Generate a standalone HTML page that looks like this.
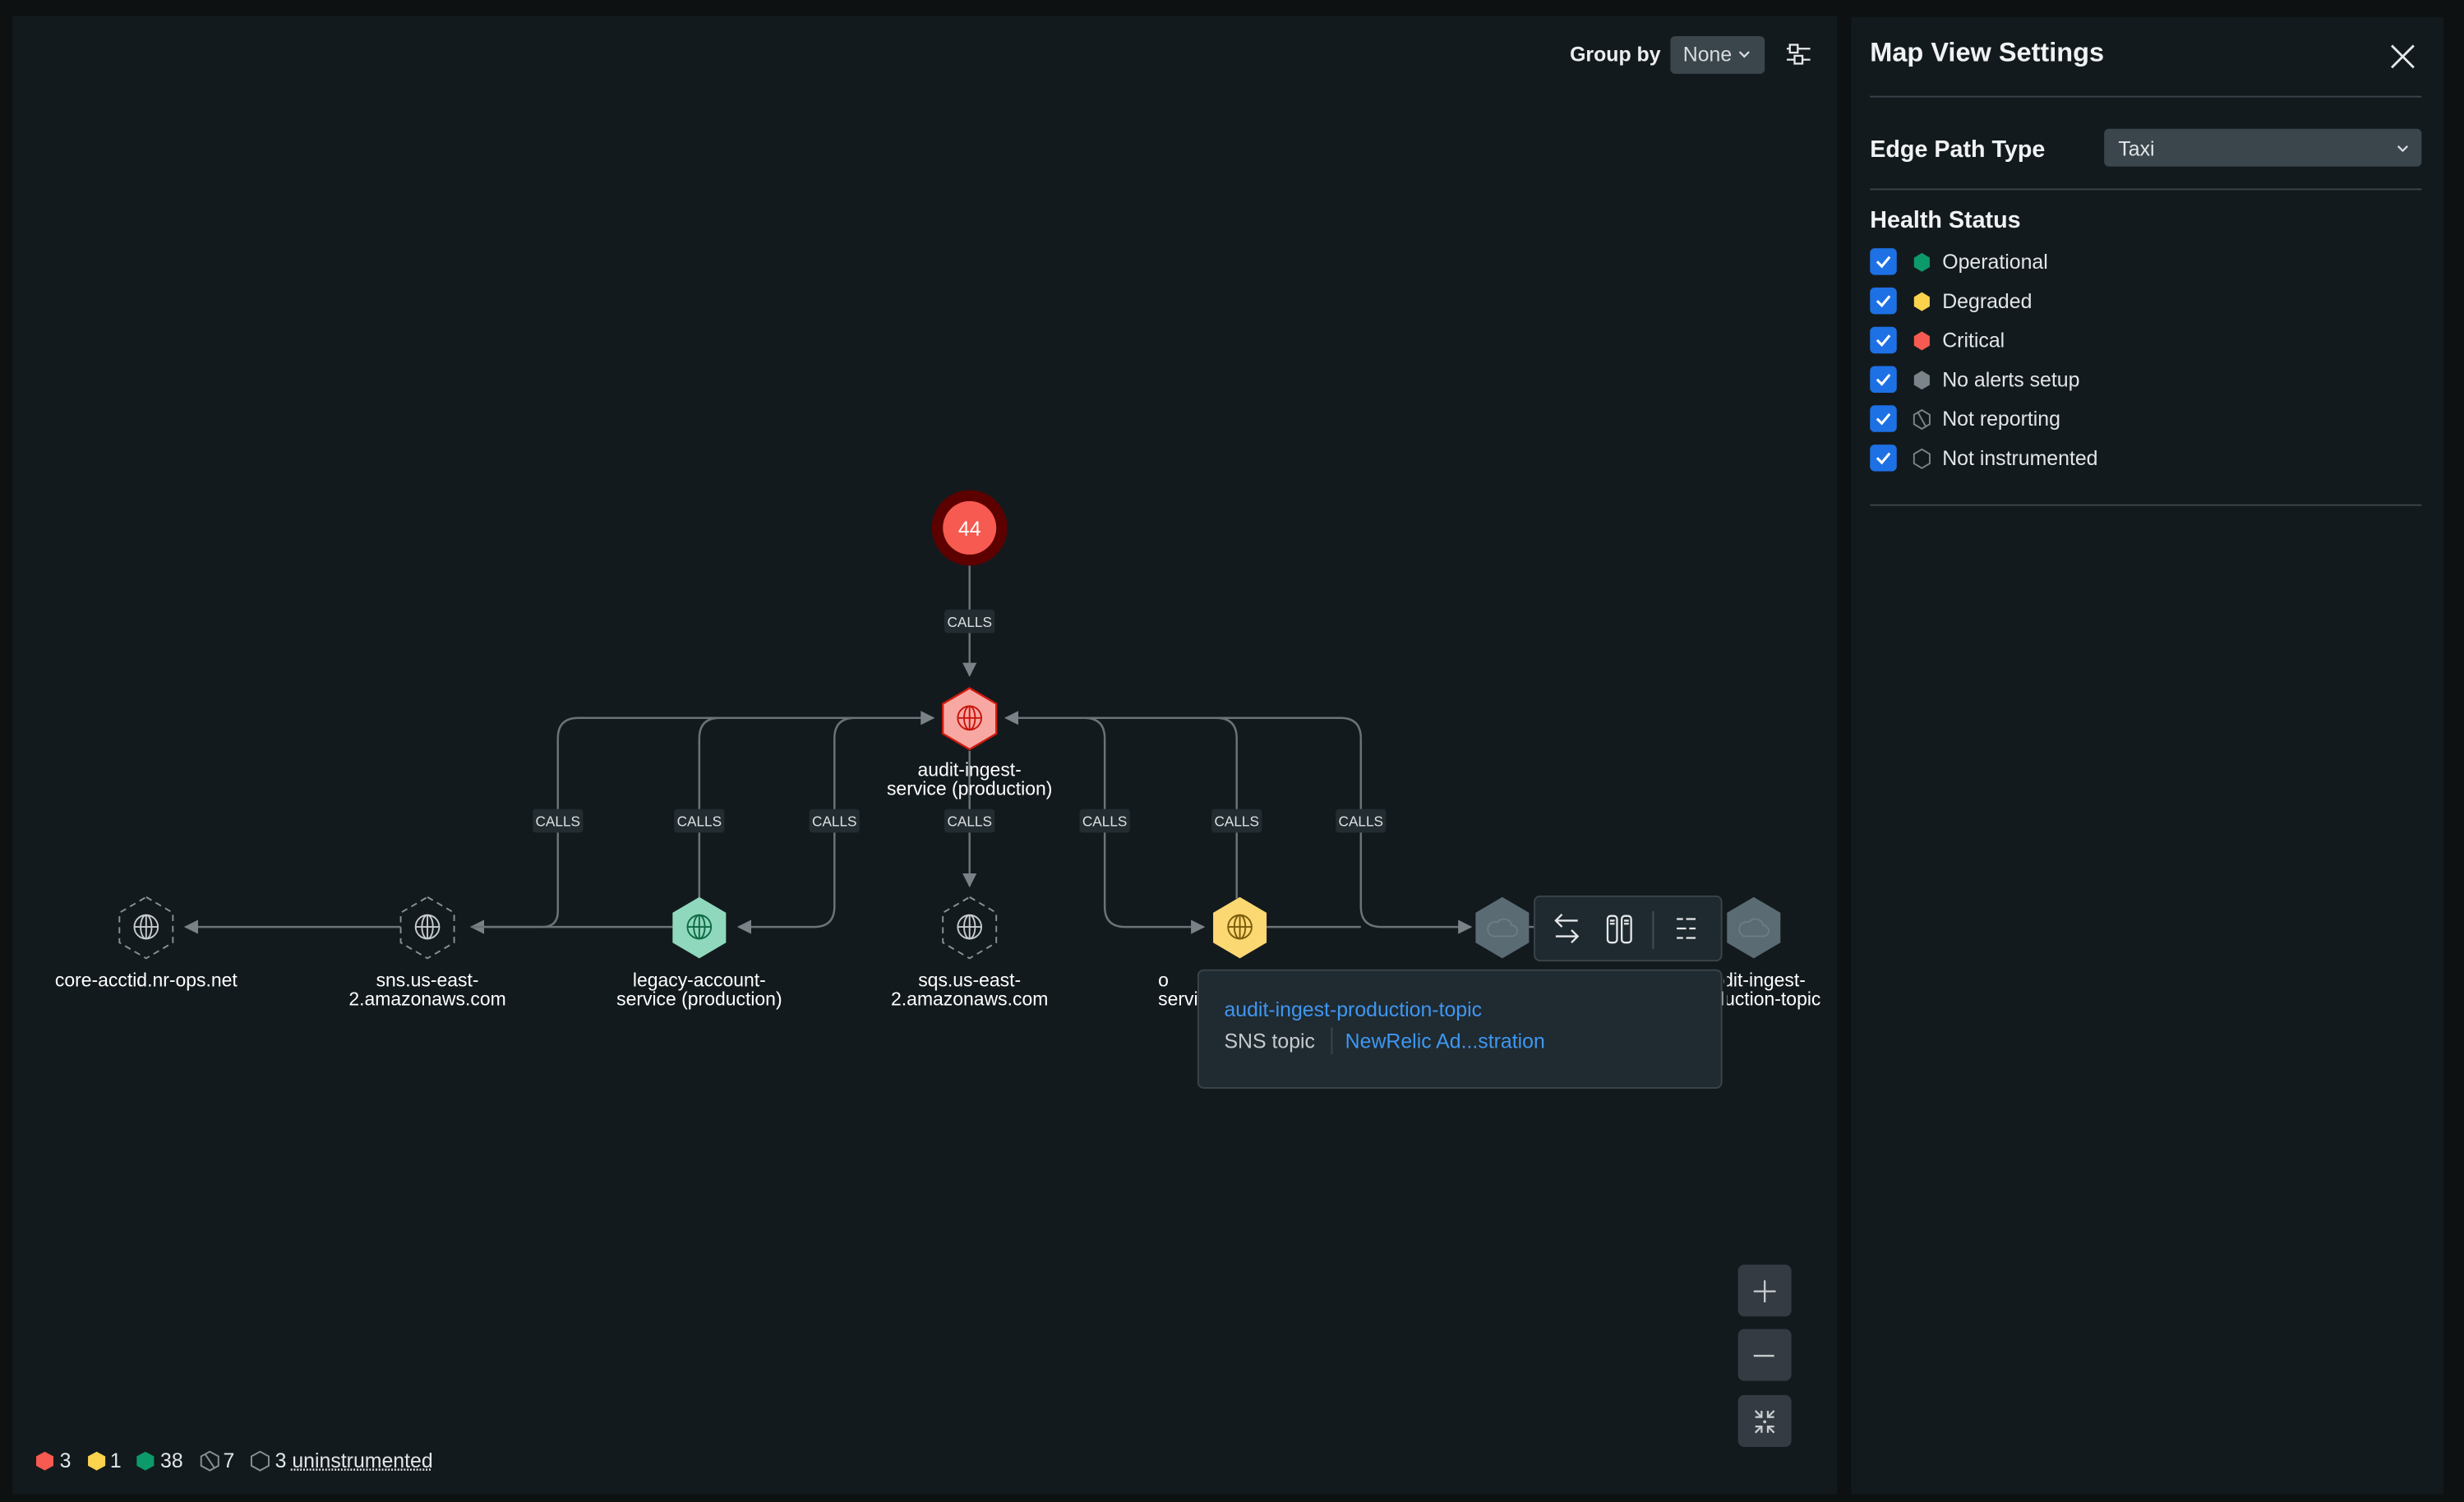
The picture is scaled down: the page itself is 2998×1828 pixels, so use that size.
<!DOCTYPE html>
<html><head><meta charset="utf-8"><style>
html,body{margin:0;padding:0;background:#0d1112;overflow:hidden;width:2998px;height:1828px}
#root{position:absolute;left:0;top:0;width:1568px;height:956px;transform:scale(1.912);transform-origin:0 0;font-family:"Liberation Sans",sans-serif;color:#e8eaeb}
.panel{position:absolute;background:#131a1d}
.abs{position:absolute}
.lbl{position:absolute;font-size:12px;line-height:12px;color:#fff;text-align:center;width:160px;margin-left:-80px}
.row{position:absolute;left:1190px;height:17px;font-size:13px;color:#e3e6e8}
.cb{position:absolute;left:0;top:0;width:17px;height:17px;background:#1d71e5;border-radius:3px}
.row span{position:absolute;left:46px;top:1px;white-space:nowrap}
.row svg.h{position:absolute;left:27px;top:2px}
.zb{position:absolute;left:1106px;width:34px;height:33px;background:#343b42;border-radius:4px}
.lg{position:absolute;top:922px;font-size:13px;color:#e3e6e8;white-space:nowrap}
.lgi{position:absolute;top:923px}
</style></head><body><div id="root">
<div class="panel" style="left:8px;top:10px;width:1161px;height:941px"></div>
<div class="panel" style="left:1178px;top:11px;width:377px;height:940px"></div>

<svg class="abs" style="left:0;top:0" width="1170" height="956" viewBox="0 0 1170 956">
<defs><marker id="ar" viewBox="0 0 10 10" refX="9" refY="5" markerWidth="9" markerHeight="9" orient="auto-start-reverse" markerUnits="userSpaceOnUse"><path d="M0,0L10,5L0,10z" fill="#7a8288"/></marker></defs>
<g stroke="#6b7379" stroke-width="1.3" fill="none">
<line x1="617" y1="360" x2="617" y2="430" marker-end="url(#ar)"/>
<line x1="617" y1="478" x2="617" y2="564" marker-end="url(#ar)"/>
<path d="M355 470 V580 Q355 590 345 590 H300" marker-end="url(#ar)"/>
<path d="M355 470 Q355 457 368 457 H594" marker-end="url(#ar)"/>
<path d="M445 470 Q445 457 458 457"/>
<line x1="445" y1="470" x2="445" y2="572"/>
<path d="M531 470 Q531 457 544 457"/>
<path d="M531 470 V577 Q531 590 518 590 H470" marker-end="url(#ar)"/>
<path d="M866 470 Q866 457 853 457 H640" marker-end="url(#ar)"/>
<path d="M703 470 Q703 457 690 457"/><path d="M787 470 Q787 457 774 457"/>
<path d="M703 470 V577 Q703 590 716 590 H766" marker-end="url(#ar)"/>
<line x1="787" y1="470" x2="787" y2="572"/>
<path d="M866 470 V577 Q866 590 879 590 H936" marker-end="url(#ar)"/>
<line x1="806" y1="590" x2="866" y2="590"/>
<line x1="255" y1="590" x2="118" y2="590" marker-end="url(#ar)"/>
<line x1="428" y1="590" x2="300" y2="590"/>
<line x1="973" y1="590" x2="980" y2="590"/>
</g>
<g font-family="Liberation Sans,sans-serif" font-size="9" fill="#dde0e2" text-anchor="middle">
<g><rect x="601" y="388" width="32" height="15" rx="2" fill="#222c31"/><text x="617" y="399">CALLS</text></g>
<g><rect x="339" y="515" width="32" height="15" rx="2" fill="#222c31"/><text x="355" y="526">CALLS</text></g>
<g><rect x="429" y="515" width="32" height="15" rx="2" fill="#222c31"/><text x="445" y="526">CALLS</text></g>
<g><rect x="515" y="515" width="32" height="15" rx="2" fill="#222c31"/><text x="531" y="526">CALLS</text></g>
<g><rect x="601" y="515" width="32" height="15" rx="2" fill="#222c31"/><text x="617" y="526">CALLS</text></g>
<g><rect x="687" y="515" width="32" height="15" rx="2" fill="#222c31"/><text x="703" y="526">CALLS</text></g>
<g><rect x="771" y="515" width="32" height="15" rx="2" fill="#222c31"/><text x="787" y="526">CALLS</text></g>
<g><rect x="850" y="515" width="32" height="15" rx="2" fill="#222c31"/><text x="866" y="526">CALLS</text></g>
</g>
<circle cx="617" cy="336" r="24" fill="#5c0000"/><circle cx="617" cy="336" r="17" fill="#f65a50"/>
<text x="617" y="341" font-family="Liberation Sans,sans-serif" font-size="13" fill="#fff" text-anchor="middle">44</text>
<path d="M617 438 L634 448 V467 L617 477 L600 467 V448Z" fill="#f8a8a2" stroke="#d21a10" stroke-width="1.2"/>
<g stroke="#c8140c" fill="none" stroke-width="1"><circle cx="617" cy="457" r="7.5"/><ellipse cx="617" cy="457" rx="3.5" ry="7.5"/><line x1="609.5" y1="457" x2="624.5" y2="457"/><line x1="617" y1="449.5" x2="617" y2="464.5"/></g>
<path d="M445 571 L462 581 V600 L445 610 L428 600 V581Z" fill="#8fd8bd"/>
<g stroke="#0e6b45" fill="none" stroke-width="1"><circle cx="445" cy="590" r="7.5"/><ellipse cx="445" cy="590" rx="3.5" ry="7.5"/><line x1="437.5" y1="590" x2="452.5" y2="590"/><line x1="445" y1="582.5" x2="445" y2="597.5"/></g>
<path d="M789 571 L806 581 V600 L789 610 L772 600 V581Z" fill="#fcd872"/>
<g stroke="#7a5b0a" fill="none" stroke-width="1"><circle cx="789" cy="590" r="7.5"/><ellipse cx="789" cy="590" rx="3.5" ry="7.5"/><line x1="781.5" y1="590" x2="796.5" y2="590"/><line x1="789" y1="582.5" x2="789" y2="597.5"/></g>
<g stroke="#8a9196" fill="none" stroke-width="1" stroke-dasharray="4 3">
<path d="M93 571 L110 581 V600 L93 610 L76 600 V581Z"/>
<path d="M272 571 L289 581 V600 L272 610 L255 600 V581Z"/>
<path d="M617 571 L634 581 V600 L617 610 L600 600 V581Z"/>
</g>
<g stroke="#c7cbce" fill="none" stroke-width="1">
<g><circle cx="93" cy="590" r="7.5"/><ellipse cx="93" cy="590" rx="3.5" ry="7.5"/><line x1="85.5" y1="590" x2="100.5" y2="590"/><line x1="93" y1="582.5" x2="93" y2="597.5"/></g>
<g><circle cx="272" cy="590" r="7.5"/><ellipse cx="272" cy="590" rx="3.5" ry="7.5"/><line x1="264.5" y1="590" x2="279.5" y2="590"/><line x1="272" y1="582.5" x2="272" y2="597.5"/></g>
<g><circle cx="617" cy="590" r="7.5"/><ellipse cx="617" cy="590" rx="3.5" ry="7.5"/><line x1="609.5" y1="590" x2="624.5" y2="590"/><line x1="617" y1="582.5" x2="617" y2="597.5"/></g>
</g>
<path d="M956 571 L973 581 V600 L956 610 L939 600 V581Z" fill="#5a6b74"/>
<path d="M1116 571 L1133 581 V600 L1116 610 L1099 600 V581Z" fill="#5a6b74"/>
<g stroke="#6d7d86" fill="none" stroke-width="1"><path d="M950 596 h12 a3.5 3.5 0 0 0 0-7 a5 5 0 0 0-9-2 a3.5 3.5 0 0 0-3 9z"/><path d="M1110 596 h12 a3.5 3.5 0 0 0 0-7 a5 5 0 0 0-9-2 a3.5 3.5 0 0 0-3 9z"/></g>
</svg>

<div class="lbl" style="left:93px;top:618px">core-acctid.nr-ops.net</div>
<div class="lbl" style="left:272px;top:618px">sns.us-east-<br>2.amazonaws.com</div>
<div class="lbl" style="left:445px;top:618px">legacy-account-<br>service (production)</div>
<div class="lbl" style="left:617px;top:618px">sqs.us-east-<br>2.amazonaws.com</div>
<div class="lbl" style="left:617px;top:484px">audit-ingest-<br>service (production)</div>
<div class="abs" style="left:737px;top:618px;font-size:12px;line-height:12px;color:#fff">o<br>servi</div>
<div class="lbl" style="left:1116px;top:618px">audit-ingest-<br>production-topic</div>

<div class="abs" style="left:976px;top:570px;width:120px;height:42px;background:#1f2a30;border:1px solid #3a454b;border-radius:4px;box-sizing:border-box">
<svg width="120" height="42" viewBox="0 0 120 42" style="position:absolute;left:-1px;top:-1px"><g stroke="#e6e8ea" fill="none" stroke-width="1.2">
<path d="M28 16 H14 M18 12 L14 16 L18 20 M14 26 H28 M24 22 L28 26 L24 30"/>
<rect x="47" y="13" width="6" height="17" rx="2"/><rect x="56" y="13" width="6" height="17" rx="2"/><path d="M48.5 16h3M48.5 18h3M57.5 16h3M57.5 18h3"/>
<line x1="76" y1="10" x2="76" y2="34" stroke="#3f4a50"/>
<path d="M91 15h4M97 15h6M91 21h6M99 21h4M91 27h4M97 27h6"/>
</g></svg></div>
<div class="abs" style="left:762px;top:617px;width:334px;height:76px;background:#1f2a31;border:1px solid #3a454b;border-radius:4px;box-sizing:border-box">
<div class="abs" style="left:16px;top:17px;font-size:13px;color:#3f97f0">audit-ingest-production-topic</div>
<div class="abs" style="left:16px;top:37px;font-size:13px;color:#c6cacd">SNS topic</div>
<div class="abs" style="left:84px;top:36px;width:1px;height:17px;background:#3a454b"></div>
<div class="abs" style="left:93px;top:37px;font-size:13px;color:#3f97f0">NewRelic Ad...stration</div>
</div>
<div class="abs" style="left:1097px;top:612px;width:2px;height:40px;background:#131a1d"></div>

<div class="abs" style="left:999px;top:27px;font-size:13px;font-weight:bold;color:#eceeef">Group by</div>
<div class="abs" style="left:1063px;top:23px;width:60px;height:24px;background:#3b454c;border-radius:3px;font-size:13px;color:#d8dcde"><span style="position:absolute;left:8px;top:4px">None</span>
<svg style="position:absolute;left:43px;top:9px" width="8" height="6"><path d="M1 1 L4 4 L7 1" stroke="#d8dcde" fill="none" stroke-width="1.2"/></svg></div>
<svg class="abs" style="left:1136px;top:27px" width="18" height="16"><g stroke="#e6e8ea" fill="none" stroke-width="1.2"><path d="M1 4h2M8 4h8M1 11h5M11 11h5"/><rect x="3" y="1.5" width="5" height="5"/><rect x="6" y="8.5" width="5" height="5"/></g></svg>

<div class="zb" style="top:805px"><svg width="34" height="33"><path d="M17 10v14M10 17h14" stroke="#c8ccce" stroke-width="1.2"/></svg></div>
<div class="zb" style="top:846px"><svg width="34" height="33"><path d="M10 17h13" stroke="#c8ccce" stroke-width="1.2"/></svg></div>
<div class="zb" style="top:888px"><svg width="34" height="33"><g stroke="#c8ccce" stroke-width="1.2" fill="none"><path d="M11 10l4 4M11 14h4v-4M23 10l-4 4M23 14h-4v-4M11 24l4-4M11 20h4v4M23 24l-4-4M23 20h-4v4"/></g><circle cx="17" cy="17" r="1" fill="#c8ccce"/></svg></div>

<svg class="lgi" style="left:22px" width="13" height="14"><path d="M6.5 1L12 4V10L6.5 13L1 10V4Z" fill="#f65a50"/></svg><div class="lg" style="left:38px">3</div>
<svg class="lgi" style="left:55px" width="13" height="14"><path d="M6.5 1L12 4V10L6.5 13L1 10V4Z" fill="#fcd34d"/></svg><div class="lg" style="left:70px">1</div>
<svg class="lgi" style="left:86px" width="13" height="14"><path d="M6.5 1L12 4V10L6.5 13L1 10V4Z" fill="#0c9a6a"/></svg><div class="lg" style="left:102px">38</div>
<svg class="lgi" style="left:127px" width="13" height="14"><path d="M6.5 1L12 4V10L6.5 13L1 10V4Z M3.5 2.5L9.5 11.5" fill="none" stroke="#8a9196"/></svg><div class="lg" style="left:142px">7</div>
<svg class="lgi" style="left:159px" width="13" height="14"><path d="M6.5 1L12 4V10L6.5 13L1 10V4Z" fill="none" stroke="#8a9196"/></svg><div class="lg" style="left:175px">3 <span style="text-decoration:underline dotted">uninstrumented</span></div>

<div class="abs" style="left:1190px;top:24px;font-size:17px;font-weight:bold;color:#f0f2f3">Map View Settings</div>
<svg class="abs" style="left:1520px;top:27px" width="18" height="18"><path d="M2 2L16 16M16 2L2 16" stroke="#e6e8ea" stroke-width="1.5"/></svg>
<div class="abs" style="left:1190px;top:61px;width:351px;height:1px;background:#3a444a"></div>
<div class="abs" style="left:1190px;top:87px;font-size:15px;font-weight:bold;color:#f0f2f3">Edge Path Type</div>
<div class="abs" style="left:1339px;top:82px;width:202px;height:24px;background:#3b464c;border-radius:3px"><span style="position:absolute;left:9px;top:5px;font-size:13px;color:#e3e6e8">Taxi</span>
<svg style="position:absolute;left:186px;top:10px" width="8" height="6"><path d="M1 1 L4 4 L7 1" stroke="#d8dcde" fill="none" stroke-width="1.2"/></svg></div>
<div class="abs" style="left:1190px;top:120px;width:351px;height:1px;background:#3a444a"></div>
<div class="abs" style="left:1190px;top:132px;font-size:15px;font-weight:bold;color:#f0f2f3">Health Status</div>

<div class="row" style="top:158px"><div class="cb"><svg width="17" height="17"><path d="M4.5 8.5l3 3 5-6" stroke="#fff" stroke-width="1.6" fill="none"/></svg></div><svg class="h" width="12" height="14"><path d="M6 1L11 4V10L6 13L1 10V4Z" fill="#0c9a6a"/></svg><span>Operational</span></div>
<div class="row" style="top:183px"><div class="cb"><svg width="17" height="17"><path d="M4.5 8.5l3 3 5-6" stroke="#fff" stroke-width="1.6" fill="none"/></svg></div><svg class="h" width="12" height="14"><path d="M6 1L11 4V10L6 13L1 10V4Z" fill="#fcd34d"/></svg><span>Degraded</span></div>
<div class="row" style="top:208px"><div class="cb"><svg width="17" height="17"><path d="M4.5 8.5l3 3 5-6" stroke="#fff" stroke-width="1.6" fill="none"/></svg></div><svg class="h" width="12" height="14"><path d="M6 1L11 4V10L6 13L1 10V4Z" fill="#f65a50"/></svg><span>Critical</span></div>
<div class="row" style="top:233px"><div class="cb"><svg width="17" height="17"><path d="M4.5 8.5l3 3 5-6" stroke="#fff" stroke-width="1.6" fill="none"/></svg></div><svg class="h" width="12" height="14"><path d="M6 1L11 4V10L6 13L1 10V4Z" fill="#7b848a"/></svg><span>No alerts setup</span></div>
<div class="row" style="top:258px"><div class="cb"><svg width="17" height="17"><path d="M4.5 8.5l3 3 5-6" stroke="#fff" stroke-width="1.6" fill="none"/></svg></div><svg class="h" width="12" height="14"><path d="M6 1L11 4V10L6 13L1 10V4Z M3.5 2.5L8.5 11.5" fill="none" stroke="#7b848a"/></svg><span>Not reporting</span></div>
<div class="row" style="top:283px"><div class="cb"><svg width="17" height="17"><path d="M4.5 8.5l3 3 5-6" stroke="#fff" stroke-width="1.6" fill="none"/></svg></div><svg class="h" width="12" height="14"><path d="M6 1L11 4V10L6 13L1 10V4Z" fill="none" stroke="#7b848a"/></svg><span>Not instrumented</span></div>
<div class="abs" style="left:1190px;top:321px;width:351px;height:1px;background:#3a444a"></div>
</div></body></html>
